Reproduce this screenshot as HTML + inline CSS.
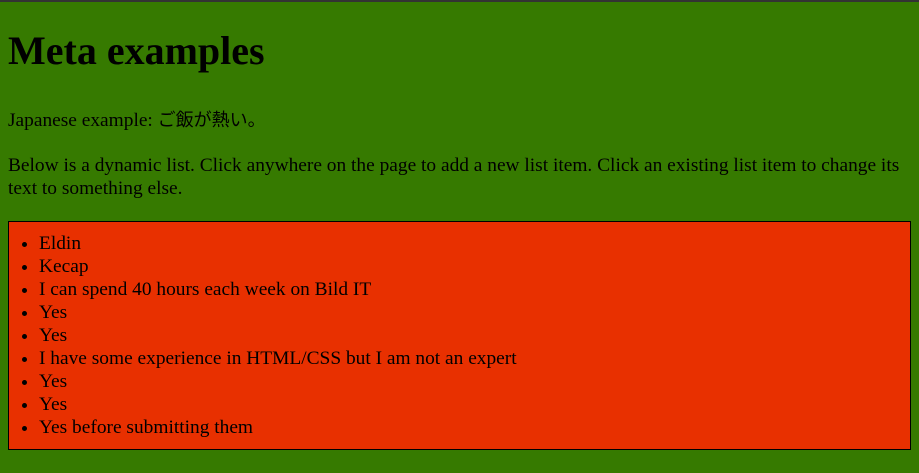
<!DOCTYPE html>
<html><head><meta charset="utf-8"><style>
html,body{margin:0;padding:0}
body{width:919px;height:473px;overflow:hidden;background:#367a00;border-top:2px solid #333;box-sizing:border-box;font-family:"Liberation Serif","Noto Serif CJK SC","Noto Sans CJK JP",serif;font-size:19.4px;line-height:23px;color:#000;padding:0 8px}
h1{font-size:40px;line-height:44px;margin:27px 0 0;font-weight:bold}
p{margin:0}
.p1{margin-top:35px}
.p2{margin-top:22px}
.box{margin-top:21px;border:1px solid #000;background:#e83000;padding:10px 0 10px}
ul{margin:0;padding-left:30px}
li{line-height:23px}
</style></head><body>
<h1>Meta examples</h1>
<p class="p1">Japanese example: <span style="font-family:'Noto Sans CJK JP',sans-serif;font-size:18px">ご飯が熱い。</span></p>
<p class="p2">Below is a dynamic list. Click anywhere on the page to add a new list item. Click an existing list item to change its text to something else.</p>
<div class="box"><ul>
<li>Eldin</li><li>Kecap</li><li>I can spend 40 hours each week on Bild IT</li><li>Yes</li><li>Yes</li><li>I have some experience in HTML/CSS but I am not an expert</li><li>Yes</li><li>Yes</li><li>Yes before submitting them</li>
</ul></div>
</body></html>
